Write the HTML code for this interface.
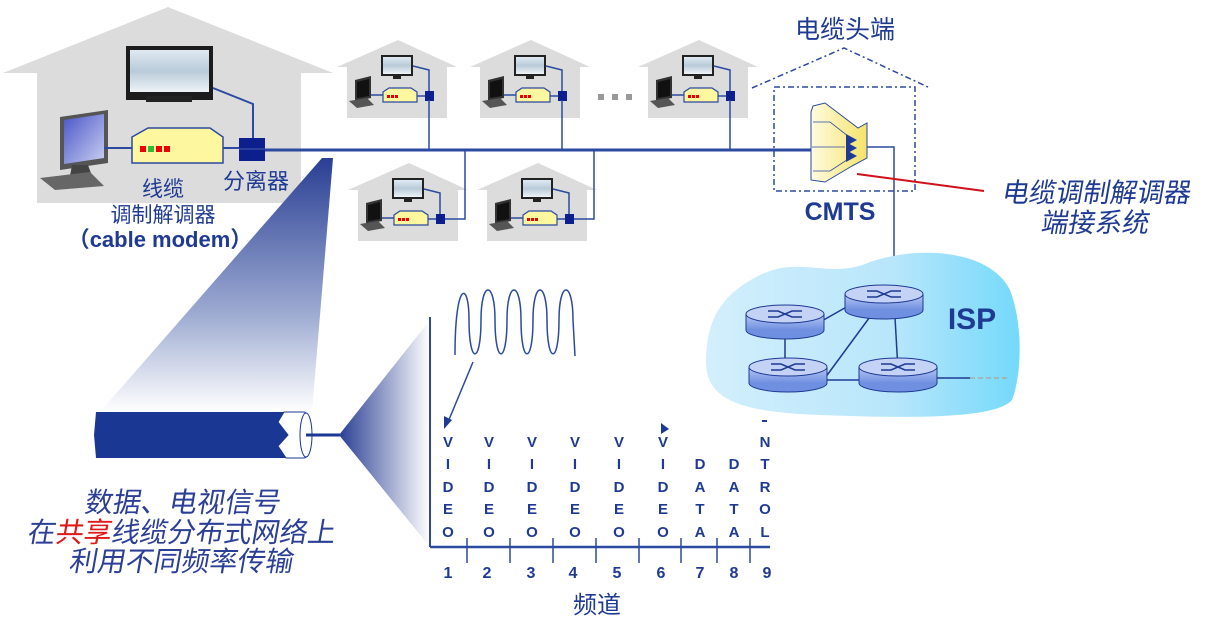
<!DOCTYPE html>
<html><head><meta charset="utf-8"><style>
html,body{margin:0;padding:0;background:#fff;}
svg{display:block;}
text{font-family:"Liberation Sans","Noto Sans CJK SC",sans-serif;}
.cj{font-family:"Noto Sans CJK SC","WenQuanYi Zen Hei",sans-serif;}
</style></head><body>
<svg width="1208" height="627" viewBox="0 0 1208 627" xmlns="http://www.w3.org/2000/svg">
<defs>
<linearGradient id="scr" x1="0" y1="0" x2="0" y2="1"><stop offset="0" stop-color="#dfe9f2"/><stop offset="0.5" stop-color="#b9cbd9"/><stop offset="1" stop-color="#eef3f7"/></linearGradient>
<linearGradient id="pcs" x1="0" y1="0" x2="1" y2="1"><stop offset="0" stop-color="#4b55c8"/><stop offset="1" stop-color="#c9d0f2"/></linearGradient>
<linearGradient id="cone" x1="0" y1="0" x2="0" y2="1"><stop offset="0" stop-color="#2a3f94"/><stop offset="0.6" stop-color="#9aa8d0"/><stop offset="1" stop-color="#ffffff"/></linearGradient>
<linearGradient id="cone2" x1="0" y1="0" x2="1" y2="0"><stop offset="0" stop-color="#2a3f94"/><stop offset="1" stop-color="#ffffff"/></linearGradient>
<linearGradient id="isp" x1="0" y1="0" x2="1" y2="0"><stop offset="0" stop-color="#d3effc"/><stop offset="0.6" stop-color="#b8e6fb"/><stop offset="1" stop-color="#74d9fb"/></linearGradient>
<linearGradient id="rt" x1="0" y1="0" x2="0" y2="1"><stop offset="0" stop-color="#b9c9f4"/><stop offset="1" stop-color="#6f8fe0"/></linearGradient>
<linearGradient id="cm" x1="0" y1="0" x2="1" y2="0"><stop offset="0" stop-color="#fffbe0"/><stop offset="1" stop-color="#f4e36a"/></linearGradient>
<g id="sh">
<polygon points="0,27 61,0 120,27" fill="#dcdcdc"/>
<rect x="10" y="27" width="100" height="51" fill="#dcdcdc"/>
<rect x="44" y="15" width="32" height="21" fill="#222"/><rect x="46" y="17" width="28" height="17" fill="url(#scr)"/>
<rect x="56" y="36" width="8" height="3" fill="#222"/>
<polygon points="18,40 34,36 34,58 18,61" fill="#333"/><polygon points="20,42 32,39 32,56 20,58" fill="#111"/>
<polygon points="12,61 30,58 37,65 20,68" fill="#555"/>
<polyline points="76,26 92,30 92,60" fill="none" stroke="#2b4aa0" stroke-width="1.5"/>
<line x1="34" y1="55" x2="46" y2="55" stroke="#2b4aa0" stroke-width="1.5"/>
<polygon points="46,52 52,48 74,48 80,52 80,62 46,62" fill="#fdf7a0" stroke="#2b4aa0" stroke-width="1.2"/>
<rect x="50" y="55" width="3" height="3" fill="#e00"/><rect x="54" y="55" width="3" height="3" fill="#e00"/><rect x="58" y="55" width="3" height="3" fill="#e00"/>
<line x1="80" y1="56" x2="88" y2="56" stroke="#2b4aa0" stroke-width="1.5"/>
<rect x="88" y="51" width="9" height="10" fill="#0d1f8c"/>
</g>
<g id="rtr">
<ellipse cx="39" cy="25" rx="39" ry="9" fill="#6f8fe0" stroke="#1f3a93"/>
<rect x="0" y="9" width="78" height="16" fill="url(#rt)"/>
<line x1="0" y1="9" x2="0" y2="25" stroke="#1f3a93"/><line x1="78" y1="9" x2="78" y2="25" stroke="#1f3a93"/>
<ellipse cx="39" cy="9" rx="39" ry="9" fill="#c4d2f6" stroke="#1f3a93"/>
<path d="M22,6 H32 L46,12 H56 M22,12 H32 L46,6 H56" fill="none" stroke="#1f3a93" stroke-width="1.5"/>
</g>
</defs>

<polygon points="3,73 168,7 333,73" fill="#dcdcdc"/>
<rect x="37" y="73" width="264" height="130" fill="#dcdcdc"/>
<rect x="126" y="46" width="87" height="54" fill="#1c1c1c"/><rect x="130" y="50" width="79" height="42" fill="url(#scr)"/>
<rect x="146" y="96" width="46" height="6" fill="#222"/>
<polyline points="213,88 253,104 253,139" fill="none" stroke="#2b4aa0" stroke-width="2"/>
<polygon points="60,117 108,110 108,163 60,170" fill="#555"/><polygon points="64,120 104,114 104,158 64,164" fill="url(#pcs)"/>
<polygon points="72,165 88,165 92,176 70,176" fill="#444"/>
<polygon points="40,178 90,172 104,186 55,190" fill="#666"/>
<line x1="104" y1="148" x2="132" y2="148" stroke="#2b4aa0" stroke-width="2"/>
<polygon points="132,137 148,128 210,128 223,137 223,163 132,163" fill="#fdf7a0" stroke="#2b4aa0" stroke-width="1.5"/>
<rect x="140" y="146" width="6" height="6" fill="#e00"/><rect x="148" y="146" width="6" height="6" fill="#3b3"/><rect x="156" y="146" width="6" height="6" fill="#e00"/><rect x="164" y="146" width="6" height="6" fill="#e00"/>
<line x1="223" y1="148" x2="239" y2="148" stroke="#2b4aa0" stroke-width="2"/>
<rect x="239" y="138" width="26" height="23" fill="#0d1f8c"/><line x1="239" y1="149" x2="265" y2="149" stroke="#4a5db0"/>
<text x="163" y="196" class="cj" font-size="21" fill="#1f3a93" text-anchor="middle">线缆</text>
<text x="163" y="222" class="cj" font-size="21" fill="#1f3a93" text-anchor="middle">调制解调器</text>
<text x="160" y="247" font-size="22" font-weight="bold" fill="#1f3a93" text-anchor="middle">（cable modem）</text>
<text x="256" y="189" class="cj" font-size="22" fill="#1f3a93" text-anchor="middle">分离器</text>

<line x1="265" y1="150" x2="812" y2="150" stroke="#2b4aa0" stroke-width="3"/>

<use href="#sh" x="337" y="40"/>
<use href="#sh" x="470" y="40"/>
<use href="#sh" x="638" y="40"/>
<line x1="429" y1="100" x2="429" y2="150" stroke="#2b4aa0" stroke-width="1.5"/>
<line x1="562" y1="100" x2="562" y2="150" stroke="#2b4aa0" stroke-width="1.5"/>
<line x1="730" y1="100" x2="730" y2="150" stroke="#2b4aa0" stroke-width="1.5"/>
<g fill="#999"><rect x="598" y="94" width="6" height="6"/><rect x="612" y="94" width="6" height="6"/><rect x="626" y="94" width="6" height="6"/></g>
<use href="#sh" x="348" y="163"/>
<use href="#sh" x="477" y="163"/>
<polyline points="445,219 465,219 465,150" fill="none" stroke="#2b4aa0" stroke-width="1.5"/>
<polyline points="574,219 594,219 594,150" fill="none" stroke="#2b4aa0" stroke-width="1.5"/>

<text x="845" y="38" class="cj" font-size="25" fill="#1f3a93" text-anchor="middle">电缆头端</text>
<polyline points="752,88 844,48 930,88" fill="none" stroke="#2b4aa0" stroke-width="1.5" stroke-dasharray="6,3,2,3"/>
<rect x="774" y="87" width="141" height="104" fill="none" stroke="#2b4aa0" stroke-width="1.5" stroke-dasharray="6,3,2,3"/>
<polyline points="867,147 894,147 894,288" fill="none" stroke="#2b4aa0" stroke-width="1.5"/>
<polygon points="813,106 825,103 858,128 867,123 867,158 852,166 825,182 811,180 811,112" fill="url(#cm)" stroke="#2b4aa0" stroke-width="1"/>
<polyline points="813,122 830,122 853,140" fill="none" stroke="#2b4aa0" stroke-width="0.8"/>
<polyline points="813,171 830,171 853,156" fill="none" stroke="#2b4aa0" stroke-width="0.8"/>
<line x1="812" y1="147" x2="845" y2="147" stroke="#2b4aa0" stroke-width="0.8"/>
<g fill="#1f3a93"><polygon points="846,134 857,140 846,146"/><polygon points="846,142 857,148 846,154"/><polygon points="846,150 857,156 846,162"/></g>
<text x="840" y="220" font-size="25" font-weight="bold" fill="#1f3a93" text-anchor="middle">CMTS</text>
<line x1="857" y1="174" x2="984" y2="191" stroke="#d0101a" stroke-width="2"/>
<text x="1096" y="202" class="cj" font-size="27" fill="#1f3a93" text-anchor="middle" transform="skewX(-10) translate(35,0)">电缆调制解调器</text>
<text x="1095" y="232" class="cj" font-size="27" fill="#1f3a93" text-anchor="middle" transform="skewX(-10) translate(40,0)">端接系统</text>

<path d="M760,275 C800,255 830,280 870,262 C920,245 990,250 1010,290 C1025,330 1020,380 1012,400 C995,420 900,418 820,415 C740,412 705,400 706,360 C707,320 720,295 760,275 Z" fill="url(#isp)"/>
<line x1="894" y1="300" x2="898" y2="370" stroke="#1f3a93" stroke-width="1.5"/>
<line x1="820" y1="322" x2="850" y2="305" stroke="#1f3a93" stroke-width="1.5"/>
<line x1="785" y1="335" x2="785" y2="365" stroke="#1f3a93" stroke-width="1.5"/>
<line x1="825" y1="378" x2="875" y2="310" stroke="#1f3a93" stroke-width="1.5"/>
<line x1="825" y1="380" x2="862" y2="380" stroke="#1f3a93" stroke-width="1.5"/>
<line x1="935" y1="378" x2="970" y2="378" stroke="#1f3a93" stroke-width="1.5"/>
<line x1="970" y1="378" x2="1010" y2="378" stroke="#aaa" stroke-width="1.5" stroke-dasharray="5,3"/>
<use href="#rtr" x="845" y="285"/>
<use href="#rtr" x="746" y="305"/>
<use href="#rtr" x="749" y="358"/>
<use href="#rtr" x="859" y="358"/>
<text x="972" y="329" font-size="30" font-weight="bold" fill="#1f3a93" text-anchor="middle">ISP</text>

<polygon points="322,158 333,158 312,412 100,412" fill="url(#cone)"/>
<path d="M96,412 H284 L278,422 L288,435 L278,446 L286,458 H96 L94,435 Z" fill="#1a3893"/>
<path d="M284,412 H304 C312,412 314,458 304,458 H286 L278,446 L288,435 L278,422 Z" fill="#fff" stroke="#1a3893" stroke-width="1"/>
<ellipse cx="306" cy="435" rx="6" ry="22" fill="#fff" stroke="#1a3893" stroke-width="1"/>
<line x1="306" y1="435" x2="340" y2="435" stroke="#1a3893" stroke-width="3"/>
<polygon points="339,435 430,320 430,547" fill="url(#cone2)"/>

<line x1="430" y1="317" x2="430" y2="547" stroke="#2b4aa0" stroke-width="2"/>
<line x1="430" y1="547" x2="770" y2="547" stroke="#2b4aa0" stroke-width="2.5"/>
<g stroke="#2b4aa0" stroke-width="1.5">
<line x1="467" y1="538" x2="467" y2="563"/><line x1="510" y1="538" x2="510" y2="563"/><line x1="553" y1="538" x2="553" y2="563"/><line x1="596" y1="538" x2="596" y2="563"/><line x1="639" y1="538" x2="639" y2="563"/><line x1="681" y1="538" x2="681" y2="563"/><line x1="717" y1="538" x2="717" y2="563"/><line x1="750" y1="538" x2="750" y2="563"/>
</g>
<path d="M455,355 C455,280 469,280 469,320 C469,365 481,365 481,320 C481,280 495,280 495,320 C495,365 507,365 507,320 C507,280 521,280 521,320 C521,365 533,365 533,320 C533,280 547,280 547,320 C547,365 559,365 559,320 C559,280 573,280 573,320 L575,356" fill="none" stroke="#2b4aa0" stroke-width="1.5"/>
<line x1="473" y1="362" x2="448" y2="422" stroke="#2b4aa0" stroke-width="1.5"/>
<polygon points="444,429 444,416 452,420" fill="#1f3a93"/>
<polygon points="661,423 669,429 661,434" fill="#1f3a93"/>
<rect x="762" y="420" width="5" height="2" fill="#1f3a93"/>
<g font-size="15" font-weight="bold" fill="#1f3a93" text-anchor="middle">
<text x="448" y="447">V</text><text x="448" y="469">I</text><text x="448" y="492">D</text><text x="448" y="514">E</text><text x="448" y="537">O</text>
<text x="489" y="447">V</text><text x="489" y="469">I</text><text x="489" y="492">D</text><text x="489" y="514">E</text><text x="489" y="537">O</text>
<text x="532" y="447">V</text><text x="532" y="469">I</text><text x="532" y="492">D</text><text x="532" y="514">E</text><text x="532" y="537">O</text>
<text x="575" y="447">V</text><text x="575" y="469">I</text><text x="575" y="492">D</text><text x="575" y="514">E</text><text x="575" y="537">O</text>
<text x="619" y="447">V</text><text x="619" y="469">I</text><text x="619" y="492">D</text><text x="619" y="514">E</text><text x="619" y="537">O</text>
<text x="663" y="447">V</text><text x="663" y="469">I</text><text x="663" y="492">D</text><text x="663" y="514">E</text><text x="663" y="537">O</text>
<text x="700" y="469">D</text><text x="700" y="492">A</text><text x="700" y="514">T</text><text x="700" y="537">A</text>
<text x="734" y="469">D</text><text x="734" y="492">A</text><text x="734" y="514">T</text><text x="734" y="537">A</text>
<text x="765" y="447">N</text><text x="765" y="469">T</text><text x="765" y="492">R</text><text x="765" y="514">O</text><text x="765" y="537">L</text>
</g>
<g font-size="16" font-weight="bold" fill="#1f3a93" text-anchor="middle">
<text x="448" y="578">1</text><text x="487" y="578">2</text><text x="531" y="578">3</text><text x="573" y="578">4</text><text x="617" y="578">5</text><text x="661" y="578">6</text><text x="700" y="578">7</text><text x="734" y="578">8</text><text x="767" y="578">9</text>
</g>
<text x="597" y="613" class="cj" font-size="24" fill="#1f3a93" text-anchor="middle">频道</text>

<g class="cj" font-size="28" fill="#2b3f96" text-anchor="middle">
<text x="182" y="512" transform="skewX(-10) translate(90,0)">数据、电视信号</text>
<text x="181" y="542" transform="skewX(-10) translate(95,0)">在<tspan fill="#e01818">共享</tspan>线缆分布式网络上</text>
<text x="181" y="571" transform="skewX(-10) translate(100,0)">利用不同频率传输</text>
</g>
</svg>
</body></html>
